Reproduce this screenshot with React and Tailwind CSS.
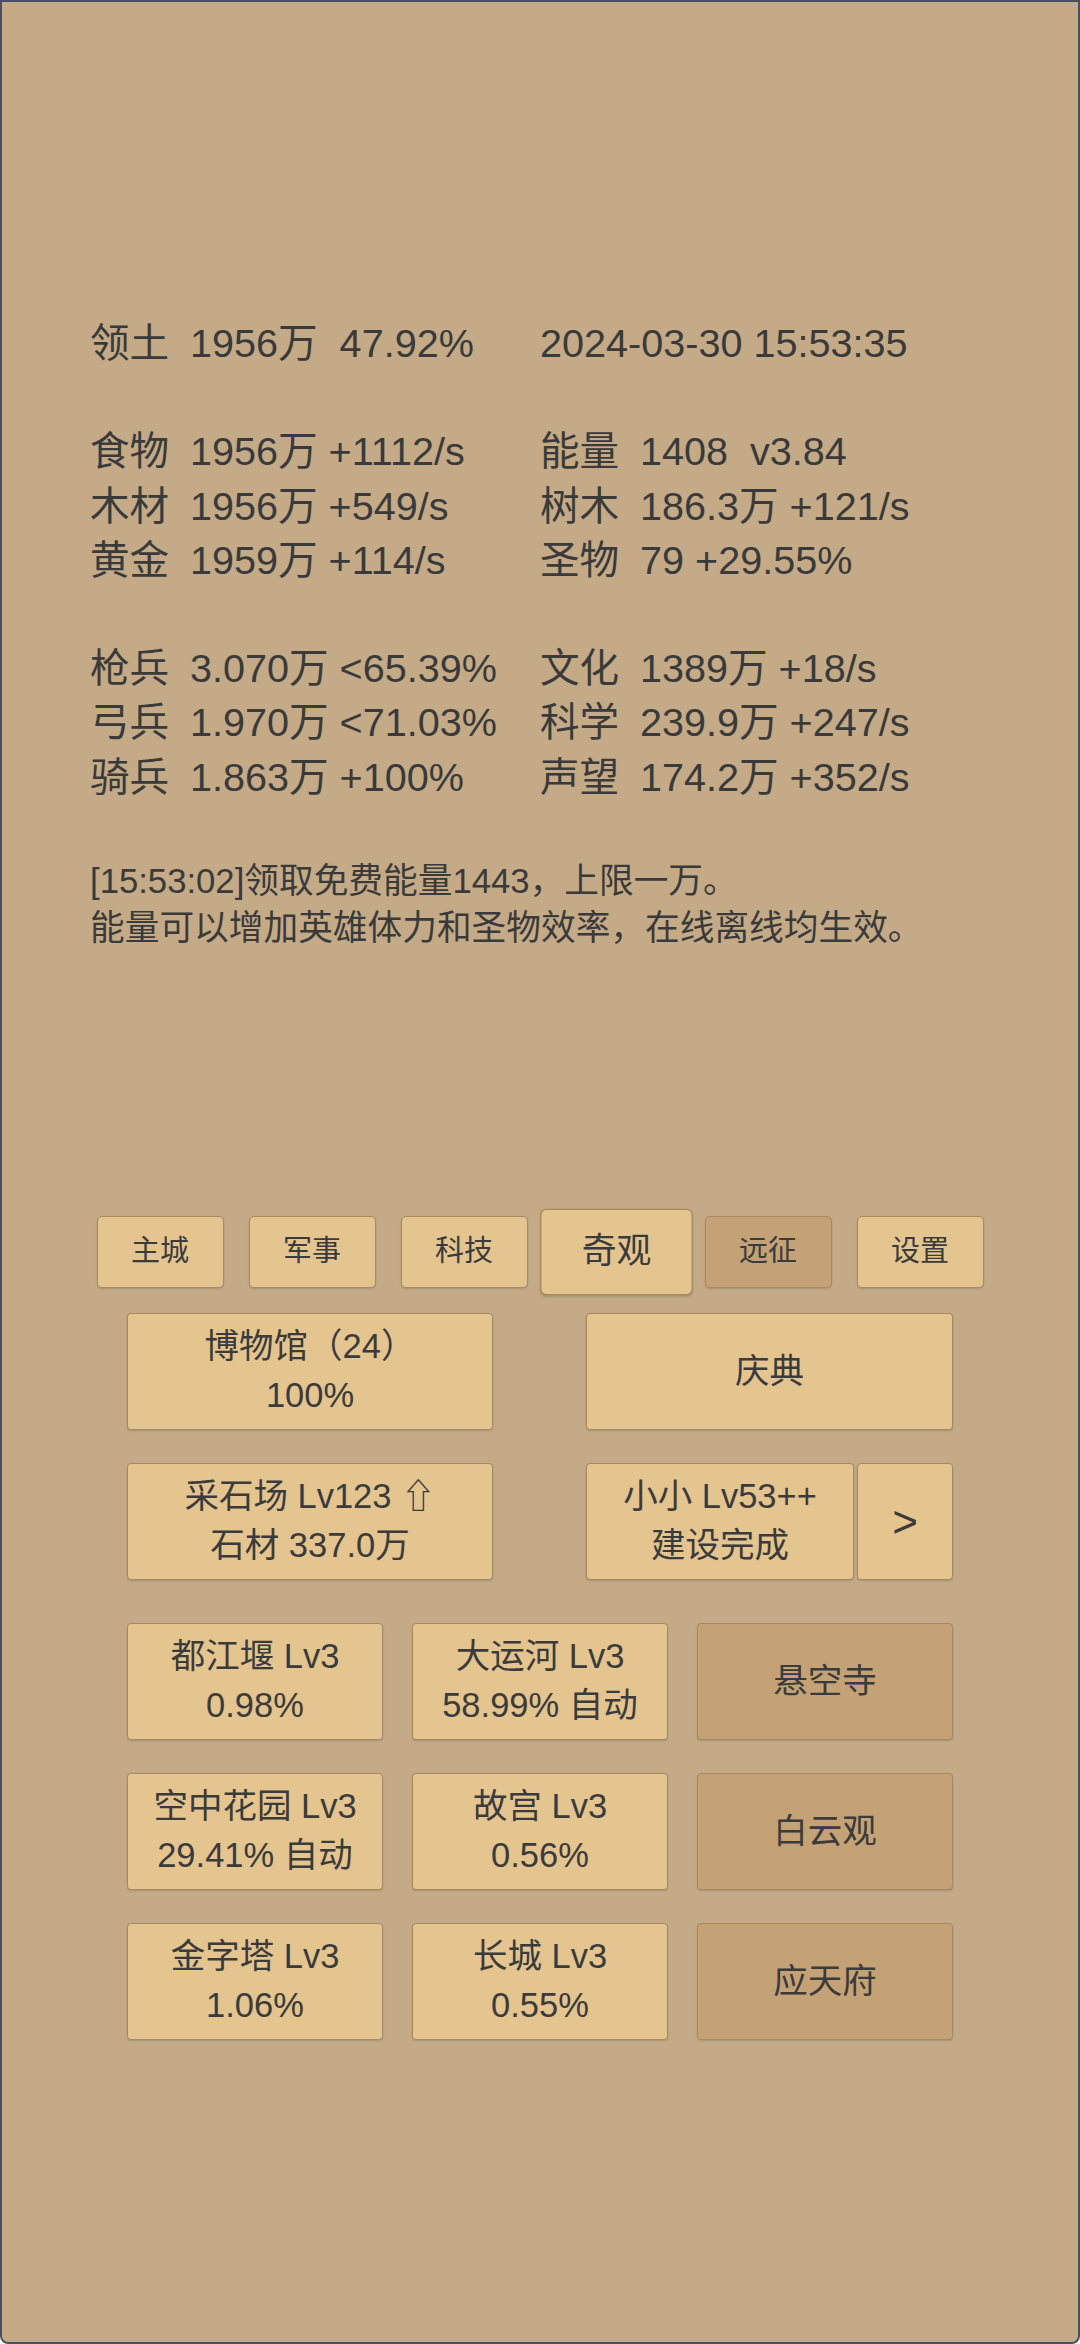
const stats = [
  [['领土', '1956万  47.92%'], [null, '2024-03-30 15:53:35']],
  null,
  [['食物', '1956万 +1112/s'], ['能量', '1408  v3.84']],
  [['木材', '1956万 +549/s'], ['树木', '186.3万 +121/s']],
  [['黄金', '1959万 +114/s'], ['圣物', '79 +29.55%']],
  null,
  [['枪兵', '3.070万 <65.39%'], ['文化', '1389万 +18/s']],
  [['弓兵', '1.970万 <71.03%'], ['科学', '239.9万 +247/s']],
  [['骑兵', '1.863万 +100%'], ['声望', '174.2万 +352/s']],
]

const tabs = [
  { label: '主城' },
  { label: '军事' },
  { label: '科技' },
  { label: '奇观', active: true },
  { label: '远征', dark: true },
  { label: '设置' },
]

const wonders = [
  { lines: ['都江堰 Lv3', '0.98%'] },
  { lines: ['大运河 Lv3', '58.99% 自动'] },
  { lines: ['悬空寺'], dark: true },
  { lines: ['空中花园 Lv3', '29.41% 自动'] },
  { lines: ['故宫 Lv3', '0.56%'] },
  { lines: ['白云观'], dark: true },
  { lines: ['金字塔 Lv3', '1.06%'] },
  { lines: ['长城 Lv3', '0.55%'] },
  { lines: ['应天府'], dark: true },
]

function Cell({ cell }) {
  if (!cell) return null
  const [label, value] = cell
  if (!label) return <span className="whitespace-pre">{value}</span>
  return (
    <div className="flex">
      <span className="w-[100px] shrink-0">{label}</span>
      <span className="whitespace-pre">{value}</span>
    </div>
  )
}

function Btn({ lines, dark, className = '' }) {
  return (
    <button
      className={
        'h-[117px] flex flex-col items-center justify-center rounded-[4px] border border-[#a88a60] shadow-[0_1px_2px_rgba(0,0,0,0.15)] text-[34.5px] leading-[49px] text-[#3b3b3b] ' +
        (dark ? 'bg-[#c4a276] ' : 'bg-[#e4c48f] ') +
        className
      }
    >
      {lines.map((l, i) => (
        <span key={i} className="whitespace-pre">{l}</span>
      ))}
    </button>
  )
}

export default function App() {
  return (
    <div
      className="h-[2344px] w-full overflow-hidden bg-[#c4aa87] border-2 border-[#4b4e68] rounded-b-[8px] text-[#3a3a3a]"
      style={{ fontFamily: '"Liberation Sans", "Noto Sans CJK SC", sans-serif' }}
    >
      <div className="pt-[314px] pl-[88px] text-[39.6px] leading-[54.2px]">
        {stats.map((row, i) =>
          row ? (
            <div key={i} className="grid grid-cols-[450px_1fr] h-[54.2px]">
              <Cell cell={row[0]} />
              <Cell cell={row[1]} />
            </div>
          ) : (
            <div key={i} className="h-[54.2px]" />
          )
        )}
      </div>

      <div className="mt-[54px] pl-[88px] text-[34.7px] leading-[47px]">
        <p>[15:53:02]领取免费能量1443，上限一万。</p>
        <p>能量可以增加英雄体力和圣物效率，在线离线均生效。</p>
      </div>

      <div className="mt-[264px] flex justify-center gap-[25px]">
        {tabs.map(t => (
          <button
            key={t.label}
            className={
              'w-[127px] h-[72px] rounded-[5px] border border-[#a88a60] shadow-[0_1px_2px_rgba(0,0,0,0.15)] text-[29px] text-[#3b3b3b] ' +
              (t.dark ? 'bg-[#c4a276] ' : 'bg-[#e4c48f] ') +
              (t.active ? 'scale-[1.2]' : '')
            }
          >
            {t.label}
          </button>
        ))}
      </div>

      <div className="w-[826px] mx-auto mt-[25px]">
        <div className="flex justify-between">
          <Btn className="w-[366px]" lines={['博物馆（24）', '100%']} />
          <Btn className="w-[367px]" lines={['庆典']} />
        </div>
        <div className="flex justify-between mt-[33px]">
          <Btn className="w-[366px]" lines={['采石场 Lv123 ⇧', '石材 337.0万']} />
          <div className="w-[367px] flex gap-[3px]">
            <Btn className="flex-1" lines={['小小 Lv53++', '建设完成']} />
            <Btn className="w-[96px] !text-[44px]" lines={['>']} />
          </div>
        </div>
        <div className="grid grid-cols-3 gap-x-[29px] gap-y-[33px] mt-[43px]">
          {wonders.map((w, i) => (
            <Btn key={i} lines={w.lines} dark={w.dark} />
          ))}
        </div>
      </div>
    </div>
  )
}
